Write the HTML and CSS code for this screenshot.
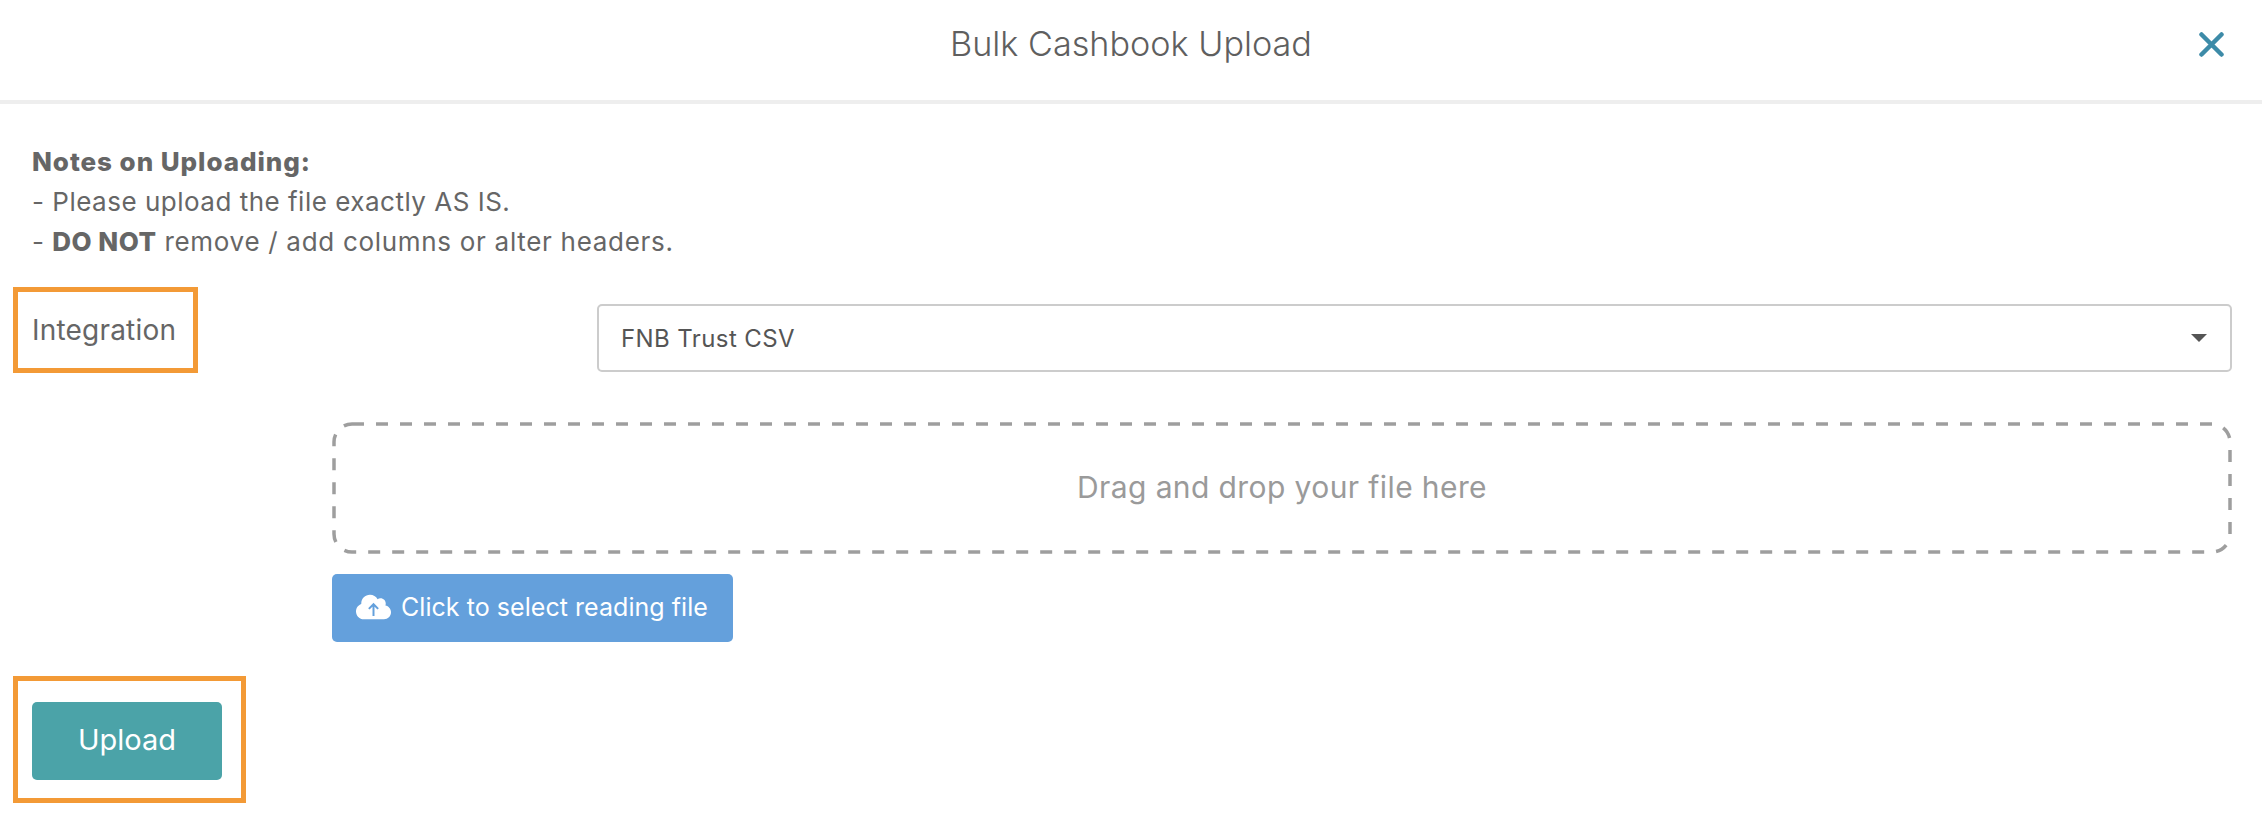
FILE: index.html
```html
<!DOCTYPE html>
<html lang="en">
<head>
<meta charset="utf-8">
<title>Bulk Cashbook Upload</title>
<link rel="stylesheet" href="styles.css">
</head>
<body>
<header class="modal-header">
  <h1 class="modal-title">Bulk Cashbook Upload</h1>
  <svg class="close-icon" viewBox="0 0 25 25" aria-label="Close"><path d="M2.5 2.5l20 20M22.5 2.5l-20 20"/></svg>
</header>
<main class="modal-body">
  <div class="notes">
    <strong class="notes-title">Notes on Uploading:</strong><br>
    - Please upload the file exactly AS IS.<br>
    - <strong>DO NOT</strong> <span class="notes-tail">remove / add columns or alter headers.</span>
  </div>
  <div class="field-row">
    <label class="field-label">Integration<span class="callout callout-label"></span></label>
    <div class="select-box">
      <span>FNB Trust CSV</span>
      <span class="caret"></span>
    </div>
  </div>
  <div class="upload-area">
    <div class="dropzone">
      <svg class="dash-frame" aria-hidden="true"><rect x="2" y="2" width="1896" height="128" rx="18" ry="18"/></svg>
      Drag and drop your file here
    </div>
    <button class="pick-button" type="button">
      <svg class="cloud-icon" viewBox="0 0 640 512"><path class="cloud" d="M537.6 226.6c4.1-10.7 6.4-22.4 6.4-34.6 0-53-43-96-96-96-19.7 0-38.1 6-53.3 16.2C367 64.2 315.3 32 256 32c-88.4 0-160 71.6-160 160 0 2.7.1 5.4.2 8.1C40.2 219.8 0 273.2 0 336c0 79.5 64.5 144 144 144h368c70.7 0 128-57.3 128-128 0-61.9-44-113.6-102.4-125.4z"/><path class="cloud-arrow" d="M320 420V210M235 290l85-85 85 85"/></svg>
      Click to select reading file
    </button>
  </div>
  <div class="submit-row">
    <button class="submit-button" type="button">Upload</button>
    <span class="callout callout-submit"></span>
  </div>
</main>
</body>
</html>
```

FILE: styles.css
```css
* { box-sizing: border-box; }
html, body { margin: 0; padding: 0; background: #fff; }
body {
  width: 2262px;
  height: 820px;
  overflow: hidden;
  font-family: Inter, "Noto Sans", sans-serif;
  color: #666;
}
.modal-header {
  position: relative;
  height: 104px;
  border-bottom: 4px solid #eeeeee;
  display: flex;
  align-items: center;
  justify-content: center;
  padding-bottom: 13px;
}
.modal-title {
  margin: 0;
  font-size: 34.2px;
  font-weight: 300;
  color: #5f5f5f;
}
.close-icon {
  position: absolute;
  left: 2199px;
  top: 32px;
  width: 25px;
  height: 25px;
  fill: none;
  stroke: #3d8ba8;
  stroke-width: 4.5;
  stroke-linecap: round;
}
.modal-body { padding: 38px 30px 0 32px; }
.notes { font-size: 26px; line-height: 40px; letter-spacing: 0.5px; }
.notes strong { font-weight: 800; }
.notes .notes-title { letter-spacing: 0.95px; }
.notes-tail { letter-spacing: 0.7px; }
.field-row { display: flex; margin-top: 42px; }
.field-label {
  position: relative;
  width: 565px;
  font-size: 28px;
  letter-spacing: 0.2px;
  line-height: 52px;
  flex: none;
}
.select-box {
  flex: 1;
  height: 68px;
  border: 2px solid #cccccc;
  border-radius: 5px;
  padding: 0 23px 0 22px;
  display: flex;
  align-items: center;
  justify-content: space-between;
  font-size: 24px;
  letter-spacing: 0.4px;
  color: #555;
}
.caret {
  width: 0;
  height: 0;
  border-left: 8px solid transparent;
  border-right: 8px solid transparent;
  border-top: 8px solid #555;
}
.upload-area { margin: 50px 0 0 300px; }
.dropzone {
  position: relative;
  height: 132px;
  padding-bottom: 2px;
  display: flex;
  align-items: center;
  justify-content: center;
  font-size: 30px;
  letter-spacing: 0.4px;
  color: #9a9a9a;
}
.dash-frame {
  position: absolute;
  inset: 0;
  width: 100%;
  height: 100%;
  fill: none;
  stroke: #9e9e9e;
  stroke-width: 3.5;
  stroke-dasharray: 12 12;
}
.pick-button {
  margin-top: 20px;
  width: 401px;
  height: 68px;
  border: 0;
  border-radius: 5px;
  background: #64a0dc;
  color: #fff;
  font-family: inherit;
  font-size: 25px;
  letter-spacing: 0.05px;
  display: flex;
  align-items: center;
  gap: 10px;
  padding: 0 0 2px 24px;
}
.cloud-icon { width: 35px; height: 28px; flex: none; }
.cloud { fill: #fff; }
.cloud-arrow { fill: none; stroke: #64a0dc; stroke-width: 36; }
.submit-row { position: relative; margin-top: 60px; }
.submit-button {
  display: block;
  width: 190px;
  height: 78px;
  border: 0;
  border-radius: 5px;
  background: #4ba3a8;
  color: #fff;
  font-family: inherit;
  font-size: 29px;
  padding: 0 0 4px;
}
.callout {
  position: absolute;
  border: 5px solid #f39a36;
  pointer-events: none;
}
.callout-label { left: -19px; top: -17px; width: 185px; height: 86px; }
.callout-submit { left: -19px; top: -26px; width: 233px; height: 127px; }
```
